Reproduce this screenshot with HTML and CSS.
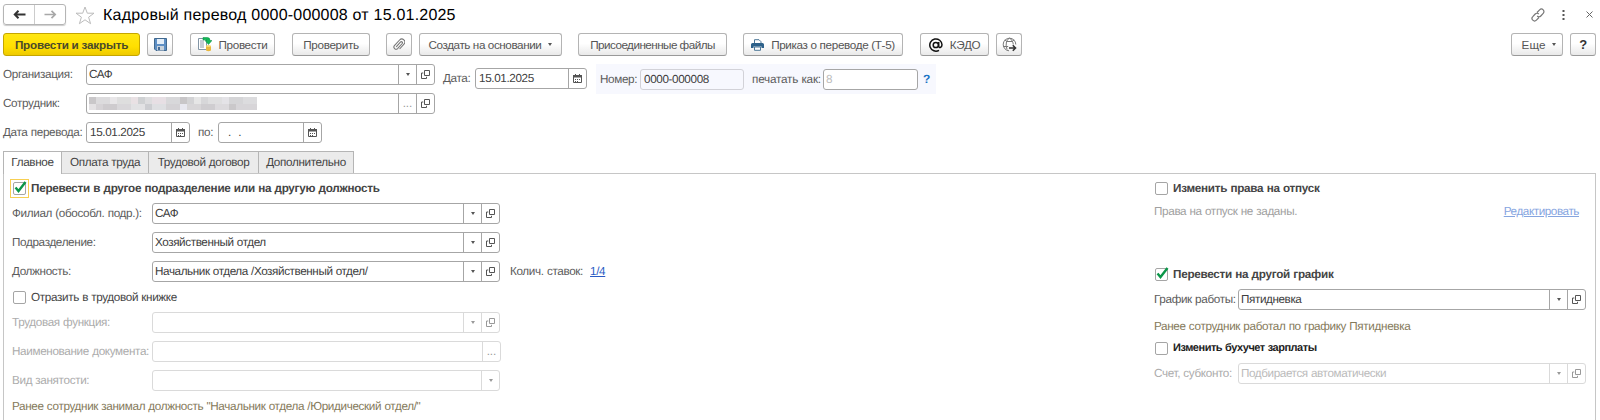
FILE: index.html
```html
<!DOCTYPE html>
<html lang="ru">
<head>
<meta charset="utf-8">
<title>Кадровый перевод</title>
<link rel="stylesheet" href="styles.css">
</head>
<body>
<svg class="defs" width="0" height="0">
  <symbol id="open" viewBox="0 0 9 9"><path d="M3.5 .5h5v5h-5zM2.3 3H.5v5.5h5V6.8" fill="none" stroke="currentColor"/></symbol>
  <symbol id="cal" viewBox="0 0 9 9"><path d="M.5 1.5h8v7h-8z" fill="none" stroke="currentColor"/><path d="M0 1h9v2.5H0zM2 0h1v2H2zM6 0h1v2H6zM2 5h1v1H2zM4 5h1v1H4zM6 5h1v1H6zM2 7h1v1H2zM4 7h1v1H4z" fill="currentColor"/></symbol>
  <symbol id="check" viewBox="0 0 14 14"><path d="M2.5 6.5 5.5 10 12.500 1" fill="none" stroke="#0a9648" stroke-width="2.4"/></symbol>
</svg>

<header class="titlebar">
  <div class="nav">
    <button><svg width="13" height="9" viewBox="0 0 13 9"><path d="M12.500 4.500H2M5.500 .800 1.800 4.500l3.700 3.700" fill="none" stroke="#333" stroke-width="2"/></svg></button>
    <button><svg width="13" height="9" viewBox="0 0 13 9"><path d="M.5 4.500H11M7.500 .800l3.700 3.700-3.700 3.700" fill="none" stroke="#a8a8a8" stroke-width="1.700"/></svg></button>
  </div>
  <svg class="star" width="20" height="19" viewBox="0 0 20 19"><path d="M10 1l2.300 6.200h6.700l-5.400 4 2 6.500-5.600-3.900-5.600 3.900 2-6.500L1 7.200h6.700z" fill="#fff" stroke="#bcbcbc"/></svg>
  <h1>Кадровый перевод 0000-000008 от 15.01.2025</h1>
  <div class="window-tools">
    <svg width="14" height="14" viewBox="0 0 14 14" fill="none" stroke="#777" stroke-width="1.200"><path d="M6 4.500l2.600-2.700a2.500 2.500 0 0 1 3.600 3.600L9.800 8a2.500 2.500 0 0 1-3.600 0M8 9.500l-2.600 2.700a2.500 2.500 0 0 1-3.600-3.600L4.200 6a2.500 2.500 0 0 1 3.600 0"/></svg>
    <svg class="dots" width="3" height="10" viewBox="0 0 3 10" fill="#555"><path d="M.5 0h2v2h-2zM.5 4h2v2h-2zM.5 8h2v2h-2z"/></svg>
    <svg width="7" height="7" viewBox="0 0 7 7"><path d="M.5.5l6 6M6.500.5l-6 6" stroke="#666"/></svg>
  </div>
</header>

<div class="toolbar">
  <button class="btn primary w137">Провести и закрыть</button>
  <button class="btn w26 g7"><svg width="13" height="13" viewBox="0 0 13 13"><path d="M.5.5h12v12H2L.5 11z" fill="#5e8fc4" stroke="#41698f"/><path d="M3 1h7v5H3z" fill="#e4eef8"/><path d="M3 8h7v4.500H3z" fill="#c9d3dc"/><path d="M4 9h2v3H4z" fill="#446a94"/></svg></button>
  <button class="btn w85 g17"><svg class="post" width="14" height="15" viewBox="0 0 14 15"><path d="M.5 1.500h8v11h-8z" fill="#fff" stroke="#8295a5"/><path d="M2 4h4M2 6h4M2 8h4M2 10h4" stroke="#8d9caa"/><path d="M5 .5h4.500q2.500 0 2.500 3h2L10.500 7.500 7 3.500h2Q9 2.500 5 3z" fill="#12b857" stroke="#078a41" stroke-width=".5"/><path d="M8 9v4.500q2.500 1.500 5 0V9z" fill="#e9b83d"/><ellipse cx="10.500" cy="9" rx="2.500" ry="1" fill="#f7da7a"/></svg><span>Провести</span></button>
  <button class="btn w78 g17">Проверить</button>
  <button class="btn w26 g16"><svg width="12" height="13" viewBox="0 0 12 13"><path d="M3.200 8.800 7.600 4a1.100 1.100 0 0 1 1.600 1.500L4.600 10.600a2.200 2.200 0 0 1-3.200-3L6.600 2a3 3 0 0 1 4.400 4.100L6.600 11" fill="none" stroke="#777" stroke-width="1.100"/></svg></button>
  <button class="btn w143 g7 create"><span>Создать на основании</span><i class="caret"></i></button>
  <button class="btn w149 g16 tight">Присоединенные файлы</button>
  <button class="btn w160 g16"><svg width="13" height="12" viewBox="0 0 13 12"><path d="M3.500 4V.7h4.500l2 2V4" fill="#fff" stroke="#4d7797"/><path d="M1.500 4h10q1.500 0 1.500 1.500V9h-2.500V7.500h-8V9H0V5.500Q0 4 1.500 4z" fill="#2d618a"/><path d="M3.500 8h6v3.300h-6z" fill="#fff" stroke="#4d7797"/></svg><span>Приказ о переводе (Т-5)</span></button>
  <button class="btn w69 g17"><svg width="14" height="14" viewBox="0 0 14 14" fill="none" stroke="#111" stroke-width="1.500"><circle cx="6.800" cy="7" r="2.600"/><path d="M9.700 4v4.200q.3 1.600 1.600 1.300Q13 9 13 6.800A6.100 6.100 0 1 0 10 12.300"/></svg><span>КЭДО</span></button>
  <button class="btn w26 g7"><svg width="15" height="15" viewBox="0 0 15 15" fill="none" stroke="#777"><path d="M7 13.800A6.300 6.300 0 1 1 13.800 7.500M4.500 4.500Q3.500 8 5 12.500M4.500 4.500h6q.8 1.500 .7 3M4.500 4.500 3 2.800M10.500 4.500 12 2.800M4.500 4.500Q5.500 2 7.500 1.200M10.500 4.500Q9.500 2 7.500 1.200M1.200 9.500h5"/><path d="M7 11h6M10.800 8.300l2.700 2.700-2.700 2.700" stroke="#333" stroke-width="1.600"/></svg></button>
  <span class="grow"></span>
  <button class="btn w51 more"><span>Еще</span><i class="caret"></i></button>
  <button class="btn w26 g7 help">?</button>
</div>

<section class="head">
  <div class="head-main">
    <div class="row"><label>Организация:</label><div class="field w349"><span>САФ</span><b><i class="caret"></i></b><b><svg><use href="#open"/></svg></b></div></div>
    <div class="row"><label>Сотрудник:</label><div class="field w349"><span><i class="mosaic"></i></span><b class="ell">...</b><b><svg><use href="#open"/></svg></b></div></div>
    <div class="row"><label>Дата перевода:</label><div class="field w104"><span class="num">15.01.2025</span><b><svg><use href="#cal"/></svg></b></div><label class="to">по:</label><div class="field w104"><span class="blank-date">.&nbsp;&nbsp;.</span><b><svg><use href="#cal"/></svg></b></div></div>
  </div>
  <div class="head-date"><label>Дата:</label><div class="field w112"><span class="num">15.01.2025</span><b><svg><use href="#cal"/></svg></b></div></div>
  <div class="number">
    <label>Номер:</label><div class="field readonly w104"><span class="num">0000-000008</span></div>
    <label class="print">печатать как:</label><div class="field w95"><span class="ghost">8</span></div><a>?</a>
  </div>
</section>

<nav class="tabs"><a class="active t1">Главное</a><a class="t2">Оплата труда</a><a class="t3">Трудовой договор</a><a class="t4">Дополнительно</a></nav>

<main class="panel">
  <section class="left">
    <div class="check first"><i class="box focus"><svg><use href="#check"/></svg></i><strong>Перевести в другое подразделение или на другую должность</strong></div>
    <div class="row"><label>Филиал (обособл. подр.):</label><div class="field w348"><span>САФ</span><b><i class="caret"></i></b><b><svg><use href="#open"/></svg></b></div></div>
    <div class="row"><label>Подразделение:</label><div class="field w348"><span>Хозяйственный отдел</span><b><i class="caret"></i></b><b><svg><use href="#open"/></svg></b></div></div>
    <div class="row"><label>Должность:</label><div class="field w348"><span>Начальник отдела /Хозяйственный отдел/</span><b><i class="caret"></i></b><b><svg><use href="#open"/></svg></b></div><label class="rate">Колич. ставок:</label><a class="link">1/4</a></div>
    <div class="check book"><i class="box"></i><span>Отразить в трудовой книжке</span></div>
    <div class="row off"><label>Трудовая функция:</label><div class="field w348"><span></span><b><i class="caret"></i></b><b><svg><use href="#open"/></svg></b></div></div>
    <div class="row off"><label>Наименование документа:</label><div class="field w349"><span></span><b class="ell">...</b></div></div>
    <div class="row off"><label>Вид занятости:</label><div class="field w348"><span></span><b><i class="caret"></i></b></div></div>
    <p class="note previous">Ранее сотрудник занимал должность "Начальник отдела /Юридический отдел/"</p>
  </section>
  <section class="right">
    <div class="check vacation"><i class="box"></i><strong>Изменить права на отпуск</strong></div>
    <div class="rights"><span>Права на отпуск не заданы.</span><a>Редактировать</a></div>
    <div class="check schedule"><i class="box"><svg><use href="#check"/></svg></i><strong>Перевести на другой график</strong></div>
    <div class="row"><label>График работы:</label><div class="field w348"><span>Пятидневка</span><b><i class="caret"></i></b><b><svg><use href="#open"/></svg></b></div></div>
    <p class="note">Ранее сотрудник работал по графику Пятидневка</p>
    <div class="check salary"><i class="box"></i><strong>Изменить бухучет зарплаты</strong></div>
    <div class="row off"><label>Счет, субконто:</label><div class="field w348"><span>Подбирается автоматически</span><b><i class="caret"></i></b><b><svg><use href="#open"/></svg></b></div></div>
  </section>
</main>
</body>
</html>
```

FILE: styles.css
```css
* { box-sizing: border-box; }
body { margin: 0; height: 420px; overflow: hidden; background: #fff; color: #444; font: 11.7px/17px "Liberation Sans", Arial, sans-serif; letter-spacing: -.34px; word-spacing: .3px; text-rendering: geometricPrecision; }
.defs { position: absolute; }
button { font: inherit; color: inherit; padding: 0; margin: 0; letter-spacing: inherit; }
label { color: #5c5c5c; flex: none; }
label, span, strong, p, a { white-space: nowrap; }
strong { letter-spacing: -.26px; }

.titlebar { display: flex; align-items: center; height: 29px; padding: 0 7px 0 3px; }
.nav { display: flex; width: 63px; height: 21px; border: 1px solid #b5b5b5; border-radius: 3px; box-shadow: 0 1px 1px #ccc; }
.nav button { flex: 1; display: flex; align-items: center; justify-content: center; border: 0; background: none; }
.nav button + button { border-left: 1px solid #ccc; }
.star { margin: 1px 0 0 9px; }
h1 { margin: 2px 0 0 8px; font-size: 16px; line-height: 21px; font-weight: normal; letter-spacing: .21px; word-spacing: 0; color: #000; }
.window-tools { margin-left: auto; display: flex; align-items: center; }
.dots { margin: 0 21px 0 17px; }

.toolbar { display: flex; padding: 4px 4px 0 3px; height: 35px; }
.btn { flex: none; display: flex; align-items: center; justify-content: center; gap: 7px; height: 23px; border: 1px solid #b4b4b4; border-bottom-color: #999; border-radius: 3px; background: linear-gradient(#fff 45%, #e9e9e9); color: #555; white-space: nowrap; letter-spacing: -.34px; }
.primary { background: linear-gradient(#ffe713, #ffdf00 60%, #efca00); border-color: #c5a600; font-weight: bold; color: #4a4a2a; letter-spacing: -.22px; }
.tight { letter-spacing: -.54px; }
.create { letter-spacing: -.42px; }
.grow { flex: 1; }
.more { padding-left: 4px; letter-spacing: 0; }
.help { font-weight: bold; font-size: 13px; color: #333; }
.caret { width: 0; height: 0; border: solid transparent; border-width: 3px 2.5px 0; border-top-color: currentColor; }
.w26 { width: 26px; } .w51 { width: 52px; } .w69 { width: 69px; } .w78 { width: 78px; } .w85 { width: 85px; } .w95 { width: 95px; }
.w104 { width: 104px; } .w112 { width: 112px; } .w137 { width: 137px; } .w143 { width: 143px; } .w149 { width: 149px; } .w160 { width: 160px; }
.w348 { width: 348px; } .w349 { width: 349px; }
.g7 { margin-left: 7px; } .g16 { margin-left: 16px; } .g17 { margin-left: 17px; }

.head { display: flex; height: 87px; padding-left: 3px; align-items: flex-start; }
.head-main { width: 440px; }
.row { display: flex; align-items: center; height: 21px; margin-bottom: 8px; }
.head-main .row > label:first-child { width: 83px; }
.field { flex: none; display: flex; height: 21px; border: 1px solid #a6a6a6; border-radius: 3px; background: #fff; line-height: 20px; color: #404040; letter-spacing: -.4px; }
.field > span { flex: 1; padding-left: 2px; }
.field > .num { padding-left: 3px; letter-spacing: -.36px; }
.field b { display: flex; align-items: center; justify-content: center; width: 18px; border-left: 1px solid #a6a6a6; font-weight: normal; color: #555; letter-spacing: 0; }
.field svg { width: 9px; height: 9px; }
.field b.ell { color: #999; }
.mosaic {
  display: block; width: 168px; height: 13px; margin-top: 3px;
  background:
    linear-gradient(90deg, #c9c7c9 0 7px, #dcdbdd 7px 21px, #e8e6e8 21px 28px, #dedede 28px 42px, #e9e1e4 42px 49px, #cfd1d3 49px 56px, #dddddf 56px 63px, #e7dfe4 63px 77px, #d8d8da 77px 91px, #c8c6c8 91px 98px, #d3d3d5 98px 105px, #e6e6e6 105px 112px, #d7d7d9 112px 119px, #dfdfe0 119px 133px, #e4e3e7 133px 140px, #d5d5d7 140px 154px, #dcdcde 154px) top / 100% 7px no-repeat,
    linear-gradient(90deg, #e4e2e4 0 7px, #d6d3d6 7px 14px, #cecbce 14px 28px, #d9d7da 28px 42px, #e2e2e4 42px 56px, #cccdd1 56px 63px, #dedfe2 63px 77px, #d4d2d5 77px 91px, #e8e8f0 91px 98px, #d8d6d8 98px 112px, #cfcdd0 112px 126px, #dcdadd 126px 140px, #cac8ca 140px 147px, #d7d5d8 147px) bottom / 100% 6px no-repeat;
}
.head-main .to { width: 20px; margin-left: 8px; }
.field > .blank-date { padding-left: 9px; letter-spacing: 0; }
.head-date { display: flex; align-items: center; height: 21px; margin-top: 4px; width: 153px; }
.head-date label { width: 32px; }
.number { display: flex; align-items: center; height: 30px; width: 340px; padding-left: 4px; background: #f7f8fe; }
.number label { width: 40px; }
.number .print { width: 71px; margin-left: 8px; letter-spacing: -.2px; }
.readonly { background: #f7f8fe; border-color: #d2d2d8; }
.ghost { color: #bbb; }
.number a { margin-left: 5px; font-size: 12px; font-weight: bold; color: #1a73c5; }

.tabs { display: flex; height: 23px; padding-left: 3px; }
.tabs a { height: 22px; line-height: 22px; text-align: center; border: 1px solid #b5b5b5; border-left: 0; border-bottom: 0; background: #ebebeb; }
.tabs .active { border-left: 1px solid #b5b5b5; background: #fff; height: 23px; position: relative; }
.t1 { width: 59px; } .t2 { width: 87px; } .t3 { width: 110px; } .t4 { width: 95px; }

.panel { display: flex; justify-content: space-between; width: 1593px; height: 260px; margin: -1px 0 0 3px; padding: 0 8px; border: 1px solid #c6c6c6; }
.left .row > label:first-child { width: 140px; }
.right { width: 433px; }
.right .row > label:first-child { width: 84px; }
.check { display: flex; align-items: center; height: 20px; }
.check strong, .check span { padding-top: 1px; }
.box { flex: none; position: relative; width: 13px; height: 13px; margin: 0 5px 0 1px; border: 1px solid #a5a5a5; border-radius: 2px; background: #fff; }
.box svg { display: block; width: 14px; height: 14px; margin: -2px 0 0 -1px; }
.focus::after { content: ""; position: absolute; inset: -4px; border: 1px solid #f7cf52; }
.first { margin: 4px 0 5px; }
.book { margin: -3px 0 5px; }
.off label { color: #acacac; }
.off .field { border-color: #dadada; color: #bbb; }
.off .field b { border-color: #dadada; color: #999; }
.rate { margin: 0 7px 0 10px; }
.link { color: #2a5bc4; text-decoration: underline; }
.note { margin: 0; color: #857a5b; }
.previous { margin-top: -1px; }
.rights { display: flex; justify-content: space-between; color: #a0a0a0; padding-right: 8px; }
.rights a { color: #86a5df; text-decoration: underline; letter-spacing: -.42px; }
.vacation { margin: 4px 0 5px; }
.schedule { margin: 44px 0 5px; }
.salary { margin: 3px 0 5px; }
.salary strong { font-size: 11px; letter-spacing: -.47px; color: #222; }
```
